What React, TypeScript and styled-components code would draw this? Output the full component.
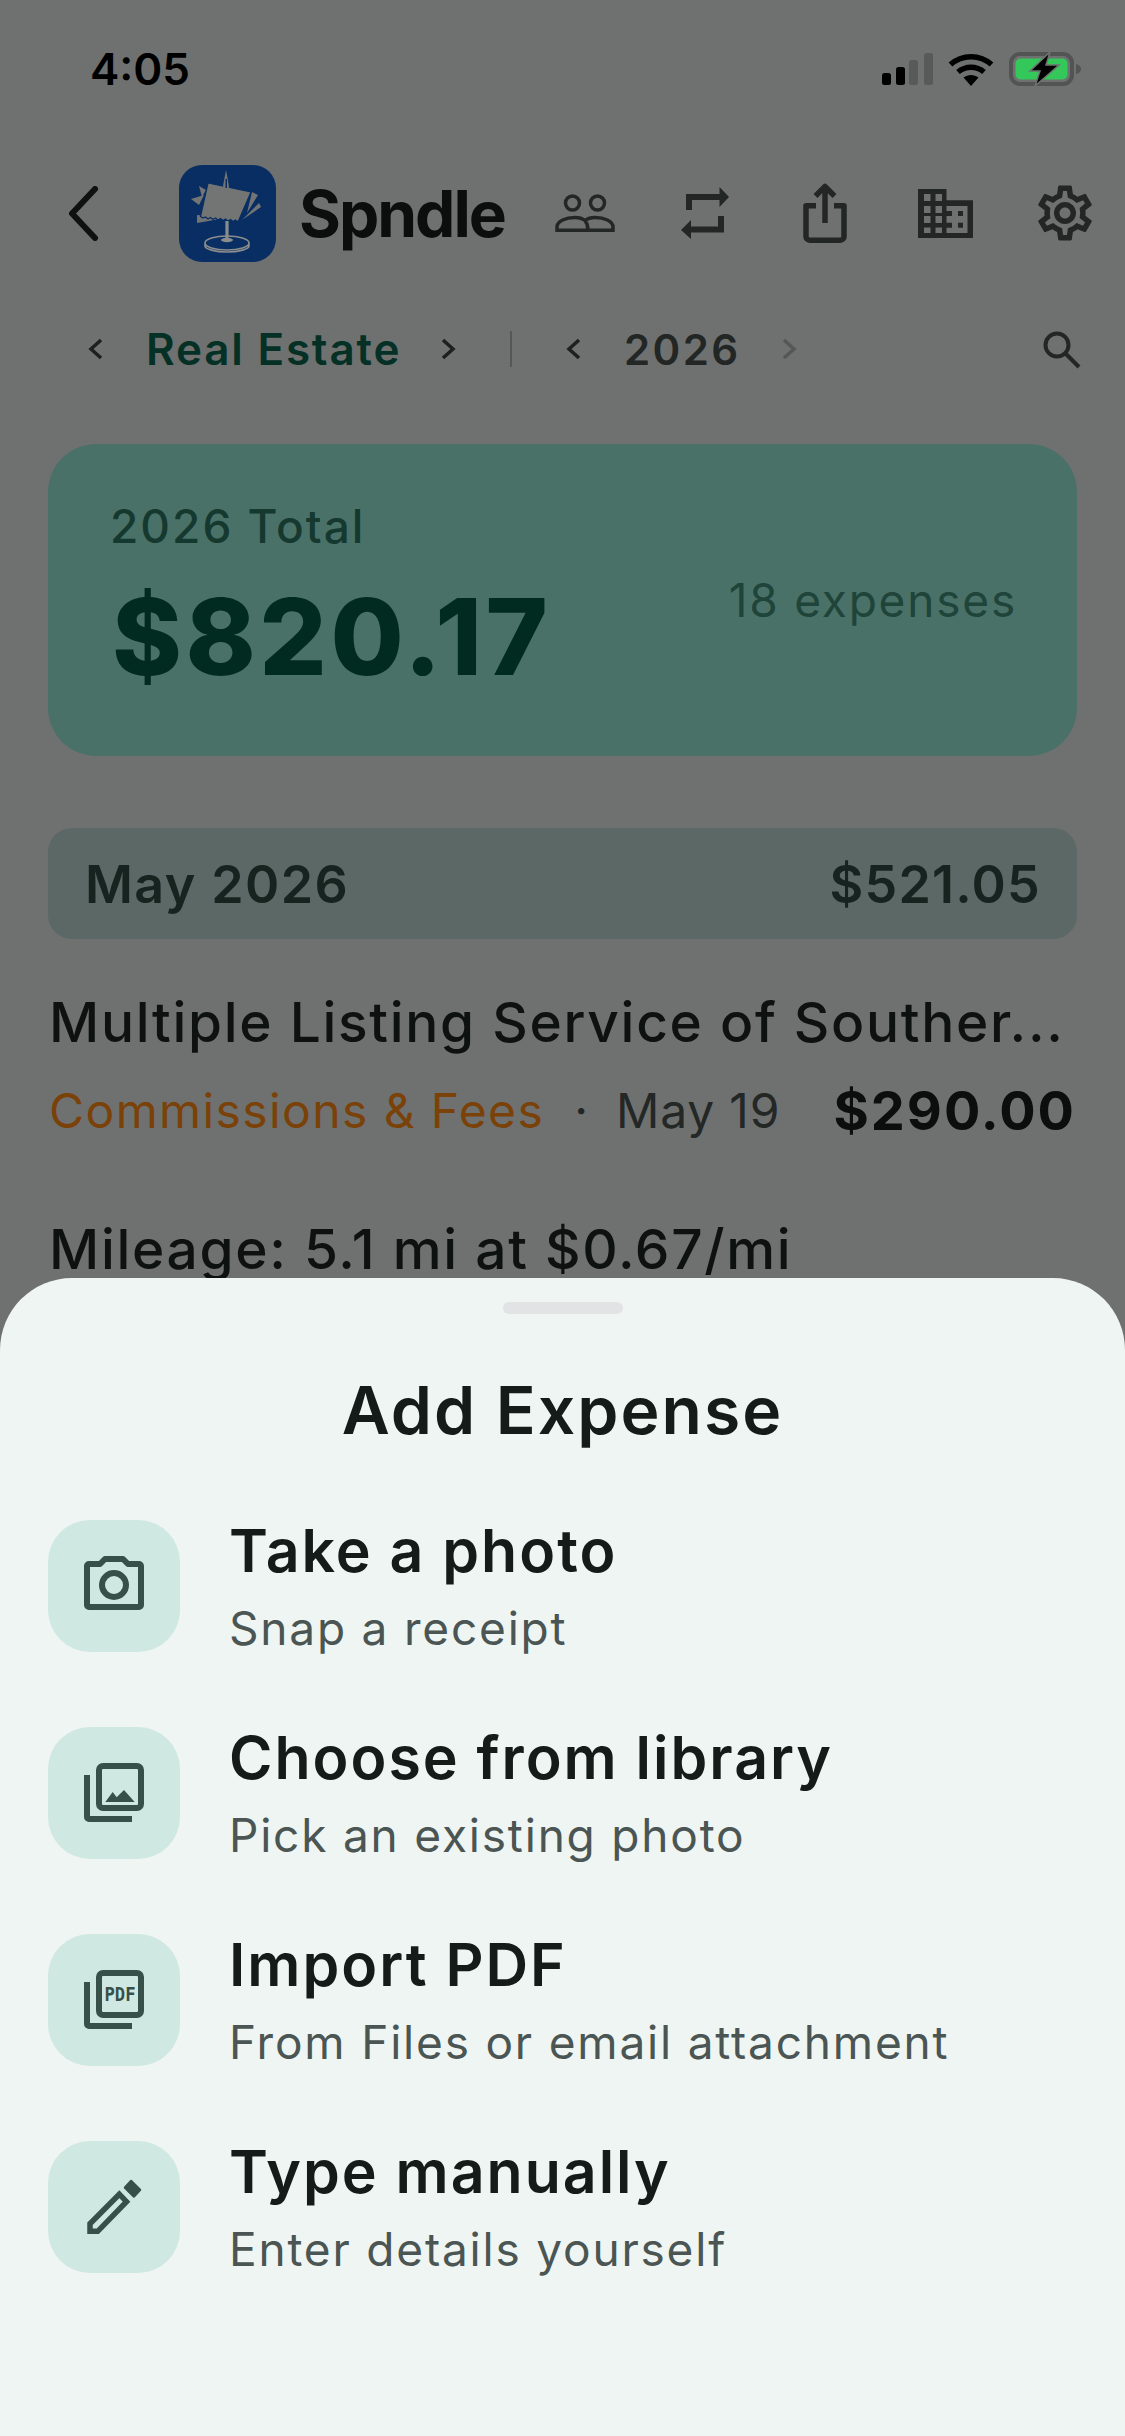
import React from "react";
import styled, { createGlobalStyle } from "styled-components";
import { MdOutlineSettings } from "react-icons/md";

const ICON = "#222625";
const TILE_INK = "#37504a";
const LOGO_BLUE = "#082e64";

const options = [
  { id: "photo", title: "Take a photo", sub: "Snap a receipt" },
  { id: "library", title: "Choose from library", sub: "Pick an existing photo" },
  { id: "pdf", title: "Import PDF", sub: "From Files or email attachment" },
  { id: "manual", title: "Type manually", sub: "Enter details yourself" },
];

function Chevron({ dir, dim }: { dir: "left" | "right"; dim?: boolean }) {
  return (
    <ChevronSvg viewBox="0 0 16 22" $dim={dim}>
      <path d={dir === "left" ? "M14 2 4 11l10 9" : "M2 2l10 9-10 9"} />
    </ChevronSvg>
  );
}

function Logo() {
  return (
    <svg width="97" height="97" viewBox="0 0 97 97">
      <rect width="97" height="97" rx="23" fill={LOGO_BLUE} />
      <path fill="#737574" d="M12 34l13-4-5 10zM20 21l7 4-4 7zM73 27l6 3-11 18zM80 38l2 4-19 13zM18 50l9 1 20 2-29 5z" />
      <path fill="#737574" stroke={LOGO_BLUE} strokeWidth="1.2" d="M29 18 72 27 59 57l-2.500-2-2.500 1.500-2.500-2-2.500 1.500-2.500-2-2.500 1.500-2.500-2-2.500 1.500-2.500-2-2.500 1.500-2.500-2-2.500 1.500-2.500-2-2.500 1-2.500-1.500z" />
      <path fill="#737574" d="M47 5l2.800 15v6.500h-5.600V20z" />
      <path fill={LOGO_BLUE} d="M46.500 14h1.500v9h-1.500z" />
      <path stroke="#8b8d8c" strokeWidth="3.200" d="M48 56v19" />
      <path fill="none" stroke="#8b8d8c" strokeWidth="1.600" d="M26 78c0-4 10-7 22-7s22 3 22 7-10 7-22 7-22-3-22-7zM26 78v3c0 3 10 6 22 6s22-3 22-6v-3" />
      <ellipse cx="48" cy="75" rx="6" ry="2.200" fill="#8b8d8c" />
    </svg>
  );
}

function TileGlyph({ id }: { id: string }) {
  if (id === "photo") {
    return (
      <svg width="132" height="132" viewBox="0 0 132 132">
        <g fill="none" stroke={TILE_INK} strokeWidth="6" strokeLinejoin="round">
          <path d="M39 46a2 2 0 0 1 2-2H52l5-5H75l5 5h11a2 2 0 0 1 2 2v39a2 2 0 0 1-2 2H41a2 2 0 0 1-2-2z" />
          <circle cx="66" cy="65" r="12" />
        </g>
      </svg>
    );
  }
  if (id === "manual") {
    return (
      <svg width="132" height="132" viewBox="0 0 132 132">
        <path fill="none" stroke={TILE_INK} strokeWidth="5.500" d="M42 82.700 71.300 53.200 78.500 60.700 49.700 90.300H42z" />
        <path fill={TILE_INK} stroke={TILE_INK} strokeWidth="2.500" strokeLinejoin="round" d="M83 40l9 9-6 6.500-9-9z" />
      </svg>
    );
  }
  return (
    <svg width="132" height="132" viewBox="0 0 132 132">
      <g fill="none" stroke={TILE_INK} strokeWidth="6">
        <rect x="51" y="39" width="42" height="42" rx="4" />
        <path d="M39 48v42a2 2 0 0 0 2 2H84" />
      </g>
      {id === "library" ? (
        <path fill={TILE_INK} d="M57.300 75 64.700 65 68.700 70.300 76 63 86.700 75z" />
      ) : (
        <PdfMark x="72" y="67" textAnchor="middle" textLength="31" lengthAdjust="spacingAndGlyphs">
          PDF
        </PdfMark>
      )}
    </svg>
  );
}

export default function App() {
  return (
    <Page>
      <GlobalStyle />
      <StatusBar>
        <Time>4:05</Time>
        <StatusIcons>
          <svg width="51" height="32" viewBox="0 0 51 32">
            <rect x="0" y="20" width="9" height="12" rx="2.500" fill="#000" />
            <rect x="14" y="14" width="9" height="18" rx="2.500" fill="#000" />
            <rect x="27" y="7" width="9" height="25" rx="2.500" fill="#585a59" />
            <rect x="42" y="0" width="9" height="32" rx="2.500" fill="#585a59" />
          </svg>
          <svg width="46" height="33" viewBox="0 0 46 33">
            <g fill="none" stroke="#000" strokeWidth="5.500">
              <path d="M2.500 11.500C14 1 32 1 43.500 11.500" />
              <path d="M10 19C17.500 12.500 28.500 12.500 36 19" />
            </g>
            <path d="M15.500 24.500C20 21 26 21 30.500 24.500L23 33z" fill="#000" />
          </svg>
          <svg width="73" height="34" viewBox="0 0 73 34">
            <rect x="2" y="2" width="61" height="30" rx="9" fill="none" stroke="#525453" strokeWidth="4" />
            <rect x="6.500" y="6.500" width="52" height="21" rx="5" fill="#34c759" />
            <path d="M67 12c3 .5 5 2.500 5 5s-2 4.500-5 5z" fill="#525453" />
            <path d="M41 0 21 19H31L26 34 50 13H37z" fill="#000" stroke="#6f7170" strokeWidth="1.500" />
          </svg>
        </StatusIcons>
      </StatusBar>

      <Header>
        <BackButton viewBox="0 0 31 55">
          <path d="M27 3 4 27.500 27 52" />
        </BackButton>
        <LogoWrap>
          <Logo />
        </LogoWrap>
        <Brand>Spndle</Brand>
        <Actions>
          <ActionIcon>
            <svg width="60" height="38" viewBox="0 0 60 38">
              <g fill="none" stroke={ICON} strokeWidth="3.500">
                <circle cx="17.500" cy="9" r="7" />
                <circle cx="42.500" cy="9" r="7" />
                <path d="M2 36.200V33c0-6 9-9.500 18-9.500 4.500 0 7.500 1 10 3 2.500-2 5.500-3 10-3 9 0 18 3.500 18 9.500v3.200zM30 26.500c2 2.500 3 5.500 3 9.700" />
              </g>
            </svg>
          </ActionIcon>
          <ActionIcon>
            <svg width="48" height="52" viewBox="0 0 48 52">
              <g fill="none" stroke={ICON} strokeWidth="6">
                <path d="M8 23V10h32" />
                <path d="M40 29v13.500H9" />
              </g>
              <path d="M38.500 0 48 10 38.500 20zM10 33 0 43 10 52z" fill={ICON} />
            </svg>
          </ActionIcon>
          <ActionIcon>
            <svg width="44" height="60" viewBox="0 0 44 60">
              <g fill="none" stroke={ICON} strokeWidth="5.500" strokeLinejoin="round">
                <path d="M13 22.700H3v31a3.500 3.500 0 0 0 3.500 3.500h31a3.500 3.500 0 0 0 3.500-3.500v-31H31" />
                <path d="M22 40V3M12.500 13 22 3.500 31.500 13" />
              </g>
            </svg>
          </ActionIcon>
          <ActionIcon>
            <svg width="55" height="49" viewBox="0 0 55 49">
              <path fill={ICON} d="M0 0h28.500v11.300H55V49H0z" />
              <g fill="#6f7170">
                <rect x="6" y="5" width="6.500" height="7" />
                <rect x="17.500" y="5" width="6.500" height="7" />
                <rect x="6" y="17" width="6.500" height="7" />
                <rect x="17.500" y="17" width="6.500" height="7" />
                <rect x="6" y="27" width="6.500" height="7" />
                <rect x="17.500" y="27" width="6.500" height="7" />
                <rect x="6" y="38.500" width="6.500" height="5.500" />
                <rect x="17.500" y="38.500" width="6.500" height="5.500" />
                <path d="M28.500 17H49.500V44H28.500V38.700H34V33.700H28.500V27H34V22H28.500z" />
              </g>
              <rect x="40" y="22" width="5" height="5" fill={ICON} />
              <rect x="40" y="33.700" width="5" height="5" fill={ICON} />
            </svg>
          </ActionIcon>
          <ActionIcon>
            <MdOutlineSettings size={66} color={ICON} />
          </ActionIcon>
        </Actions>
      </Header>

      <SubNav>
        <Chevron dir="left" />
        <Category>Real Estate</Category>
        <Chevron dir="right" />
        <Divider />
        <Chevron dir="left" />
        <YearLabel>2026</YearLabel>
        <Chevron dir="right" dim />
        <SearchIcon viewBox="0 0 39 39">
          <circle cx="15" cy="15" r="11.500" />
          <path d="M23.500 23.500 37 37" />
        </SearchIcon>
      </SubNav>

      <TotalCard>
        <div>
          <TotalLabel>2026 Total</TotalLabel>
          <TotalAmount>$820.17</TotalAmount>
        </div>
        <TotalCount>18 expenses</TotalCount>
      </TotalCard>

      <MonthBar>
        <span>May 2026</span>
        <MonthTotal>$521.05</MonthTotal>
      </MonthBar>

      <Expense>
        <ExpenseName>Multiple Listing Service of Souther...</ExpenseName>
        <ExpenseMeta>
          <ExpenseCategory>Commissions &amp; Fees</ExpenseCategory>
          <Dot>·</Dot>
          <ExpenseDate>May 19</ExpenseDate>
          <ExpenseAmount>$290.00</ExpenseAmount>
        </ExpenseMeta>
      </Expense>
      <SecondExpense>
        <ExpenseName>Mileage: 5.1 mi at $0.67/mi</ExpenseName>
      </SecondExpense>

      <Sheet>
        <Handle />
        <SheetTitle>Add Expense</SheetTitle>
        <OptionList>
          {options.map((o) => (
            <OptionRow key={o.id}>
              <Tile>
                <TileGlyph id={o.id} />
              </Tile>
              <div>
                <OptionTitle>{o.title}</OptionTitle>
                <OptionSub>{o.sub}</OptionSub>
              </div>
            </OptionRow>
          ))}
        </OptionList>
      </Sheet>
    </Page>
  );
}

const GlobalStyle = createGlobalStyle`
  html, body {
    margin: 0;
    padding: 0;
    background: #6f7170;
  }
  * {
    box-sizing: border-box;
  }
`;

const Page = styled.div`
  position: relative;
  width: 1125px;
  height: 2436px;
  overflow: hidden;
  background: #6f7170;
  font-family: Inter, "Liberation Sans", sans-serif;
  color: #0d1110;
`;

const StatusBar = styled.div`
  display: flex;
  align-items: center;
  justify-content: space-between;
  height: 138px;
  padding: 0 43px 0 90px;
`;

const Time = styled.div`
  font-size: 44px;
  font-weight: 600;
  color: #000;
`;

const StatusIcons = styled.div`
  display: flex;
  align-items: center;
  gap: 15px;

  svg {
    display: block;
  }
`;

const Header = styled.div`
  display: flex;
  align-items: center;
  height: 150px;
`;

const BackButton = styled.svg`
  width: 31px;
  height: 55px;
  margin-left: 68px;
  fill: none;
  stroke: #0d1110;
  stroke-width: 6;
  stroke-linecap: round;
  stroke-linejoin: round;
`;

const LogoWrap = styled.div`
  display: flex;
  margin-left: 80px;
`;

const Brand = styled.div`
  margin-left: 23px;
  font-size: 64px;
  font-weight: 700;
  letter-spacing: -2px;
  color: #0b0e0d;
`;

const Actions = styled.div`
  display: flex;
  margin-left: auto;
`;

const ActionIcon = styled.div`
  display: flex;
  align-items: center;
  justify-content: center;
  width: 120px;
  height: 70px;
`;

const SubNav = styled.div`
  display: flex;
  align-items: center;
  height: 122px;
  padding: 0 44px 0 87px;
`;

const ChevronSvg = styled.svg<{ $dim?: boolean }>`
  flex: none;
  width: 16px;
  height: 22px;
  fill: none;
  stroke: ${(p) => (p.$dim ? "#535756" : "#1c211f")};
  stroke-width: 3.5;
`;

const Category = styled.span`
  width: 254px;
  margin: 0 41px 0 43px;
  font-size: 44px;
  font-weight: 600;
  letter-spacing: 1.8px;
  white-space: nowrap;
  color: #053025;
`;

const Divider = styled.span`
  width: 2px;
  height: 36px;
  margin: 0 53px 0 53px;
  background: #555857;
`;

const YearLabel = styled.span`
  width: 115px;
  margin: 0 43px 0 43px;
  font-size: 42px;
  font-weight: 600;
  letter-spacing: 2.4px;
  color: #222625;
`;

const SearchIcon = styled.svg`
  width: 39px;
  height: 39px;
  margin-left: auto;
  fill: none;
  stroke: #222625;
  stroke-width: 4;
`;

const TotalCard = styled.div`
  display: flex;
  align-items: flex-start;
  justify-content: space-between;
  height: 312px;
  margin: 34px 48px 0;
  padding: 55px 60px 0 62px;
  border-radius: 48px;
  background: #4a7168;
`;

const TotalLabel = styled.div`
  font-size: 46px;
  font-weight: 500;
  letter-spacing: 2px;
  line-height: 54px;
  color: #15392f;
`;

const TotalAmount = styled.div`
  margin: 29px 0 0 2px;
  font-size: 106px;
  font-weight: 800;
  letter-spacing: 3.5px;
  line-height: 110px;
  color: #012b20;
`;

const TotalCount = styled.div`
  margin-top: 74px;
  font-size: 46px;
  letter-spacing: 1.8px;
  line-height: 54px;
  color: #1f4439;
`;

const MonthBar = styled.div`
  display: flex;
  align-items: center;
  justify-content: space-between;
  height: 111px;
  margin: 72px 48px 0;
  padding: 2px 36px 0 37px;
  border-radius: 24px;
  background: #5c6866;
  font-size: 52px;
  font-weight: 600;
  letter-spacing: 1.4px;
  color: #16231f;
`;

const MonthTotal = styled.span`
  font-weight: 600;
  letter-spacing: 1.2px;
`;

const Expense = styled.div`
  margin: 50px 49px 0;
`;

const SecondExpense = styled(Expense)`
  margin-top: 75px;
`;

const ExpenseName = styled.div`
  font-size: 55px;
  font-weight: 500;
  letter-spacing: 1.7px;
  line-height: 66px;
  white-space: nowrap;
  color: #0d1110;
`;

const ExpenseMeta = styled.div`
  display: flex;
  align-items: center;
  margin-top: 26px;
  font-size: 48px;
  line-height: 60px;
`;

const ExpenseCategory = styled.span`
  letter-spacing: 1.4px;
  color: #7a4108;
`;

const Dot = styled.span`
  margin: 0 28px 0 30px;
  color: #222625;
`;

const ExpenseDate = styled.span`
  letter-spacing: 0.8px;
  color: #232726;
`;

const ExpenseAmount = styled.span`
  margin-left: auto;
  font-size: 54px;
  font-weight: 700;
  letter-spacing: 2px;
  color: #0b0e0d;
`;

const Sheet = styled.div`
  position: absolute;
  top: 1278px;
  right: 0;
  bottom: 0;
  left: 0;
  border-radius: 72px 72px 0 0;
  background: #eff5f2;
`;

const Handle = styled.div`
  width: 120px;
  height: 12px;
  margin: 24px auto 0;
  border-radius: 6px;
  background: #e2e3e4;
`;

const SheetTitle = styled.h2`
  margin: 56px 0 0;
  font-size: 66px;
  font-weight: 600;
  letter-spacing: 2px;
  line-height: 80px;
  text-align: center;
  color: #151b19;
`;

const OptionList = styled.div`
  display: flex;
  flex-direction: column;
  gap: 69px;
  margin-top: 67px;
  padding: 0 48px;
`;

const OptionRow = styled.div`
  display: flex;
  align-items: center;
  gap: 49px;
`;

const Tile = styled.div`
  flex: none;
  width: 132px;
  height: 132px;
  border-radius: 42px;
  background: #cfe8e1;

  svg {
    display: block;
  }
`;

const OptionTitle = styled.div`
  font-size: 59px;
  font-weight: 600;
  letter-spacing: 2px;
  line-height: 68px;
  color: #151b19;
`;

const OptionSub = styled.div`
  margin-top: 16px;
  font-size: 46px;
  letter-spacing: 1.8px;
  line-height: 54px;
  color: #4b5553;
`;

const PdfMark = styled.text`
  font-family: "DejaVu Sans Mono", monospace;
  font-size: 19px;
  font-weight: 700;
  fill: ${TILE_INK};
`;
